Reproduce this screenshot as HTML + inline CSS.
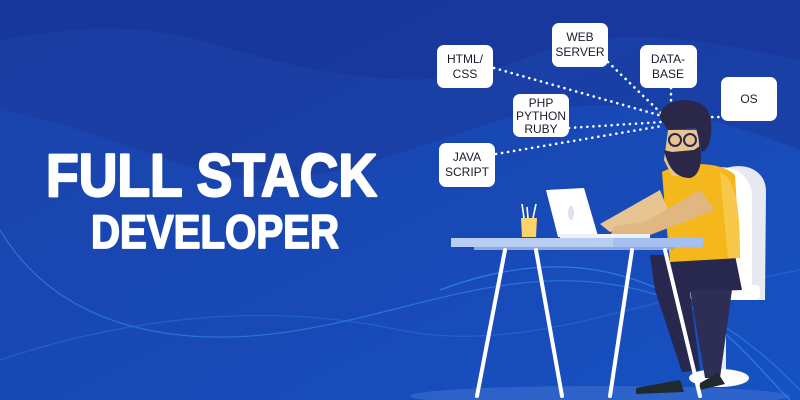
<!DOCTYPE html>
<html><head><meta charset="utf-8"><style>
html,body{margin:0;padding:0;width:800px;height:400px;overflow:hidden;background:#1845b0}
svg{display:block}
</style></head><body>
<svg width="800" height="400" viewBox="0 0 800 400" xmlns="http://www.w3.org/2000/svg">
<defs>
<linearGradient id="bg" x1="0" y1="0" x2="1" y2="1">
<stop offset="0" stop-color="#1c42aa"/><stop offset="0.5" stop-color="#1848b4"/><stop offset="1" stop-color="#1652c2"/>
</linearGradient>
</defs>
<rect width="800" height="400" fill="url(#bg)"/>
<path d="M0 0 H800 V150 C700 110 600 90 500 120 C400 150 300 200 200 170 C120 145 60 120 0 110Z" fill="#1a3a9c" opacity="0.6"/>
<path d="M0 0 H800 V60 C700 40 620 20 520 60 C420 100 300 70 200 40 C120 20 60 30 0 40Z" fill="#17339a" opacity="0.6"/>
<path d="M0 230 C60 330 180 350 300 330 C420 310 520 260 640 290 C720 310 770 360 800 390" stroke="#2d7be0" stroke-width="1.3" fill="none" opacity="0.8"/>
<path d="M0 360 C120 320 260 300 400 330 C520 355 640 300 800 270" stroke="#2a6fd8" stroke-width="1.2" fill="none" opacity="0.6"/>
<path d="M440 290 C520 260 600 255 680 300 C730 330 760 370 790 400" stroke="#2f86ea" stroke-width="1.3" fill="none" opacity="0.8"/>

<text x="46" y="196" font-family="Liberation Sans, sans-serif" font-weight="bold" font-size="60" fill="#fff" stroke="#fff" stroke-width="2.2" stroke-linejoin="round" textLength="331" lengthAdjust="spacingAndGlyphs">FULL STACK</text>
<text x="91" y="248" font-family="Liberation Sans, sans-serif" font-weight="bold" font-size="47" fill="#fff" stroke="#fff" stroke-width="1.8" stroke-linejoin="round" textLength="248" lengthAdjust="spacingAndGlyphs">DEVELOPER</text>

<g stroke="#fff" stroke-width="2.6" stroke-dasharray="0.1 6" stroke-linecap="round" fill="none">
<path d="M494 68 L662 116"/><path d="M608 62 L662 114"/><path d="M671 88 L671 110"/>
<path d="M700 117 L721 117"/><path d="M569 128 L662 122"/><path d="M496 154 L662 126"/>
</g>
<g fill="#fff">
<rect x="437" y="45" width="56" height="43" rx="7"/>
<rect x="552" y="23" width="56" height="44" rx="7"/>
<rect x="640" y="45" width="57" height="43" rx="7"/>
<rect x="721" y="77" width="56" height="44" rx="7"/>
<rect x="513" y="94" width="56" height="43" rx="7"/>
<rect x="439" y="143" width="56" height="44" rx="7"/>
</g>
<g font-family="Liberation Sans, sans-serif" font-size="12" fill="#1b1b2b" text-anchor="middle">
<text x="465" y="63">HTML/</text><text x="465" y="78">CSS</text>
<text x="580" y="41">WEB</text><text x="580" y="56">SERVER</text>
<text x="668" y="63">DATA-</text><text x="668" y="78">BASE</text>
<text x="749" y="103">OS</text>
<text x="541" y="107">PHP</text><text x="541" y="120">PYTHON</text><text x="541" y="133">RUBY</text>
<text x="467" y="161">JAVA</text><text x="467" y="176">SCRIPT</text>
</g>

<ellipse cx="600" cy="396" rx="190" ry="10" fill="#3d6fd0" opacity="0.6"/>
<path d="M720 170 C745 160 765 170 766 190 L765 300 L745 300 L735 175Z" fill="#e6e8f2"/>
<path d="M705 170 C730 162 750 172 752 195 L752 300 L700 300Z" fill="#fff"/>
<rect x="690" y="285" width="70" height="15" rx="4" fill="#fff"/>
<rect x="712" y="300" width="14" height="70" fill="#e8eaf2"/>
<ellipse cx="719" cy="378" rx="30" ry="9" fill="#fff"/>
<path d="M650 255 L735 255 L742 290 L690 292 L700 370 L682 372 L655 290Z" fill="#28274d"/>
<path d="M690 290 L732 290 L720 378 L705 378Z" fill="#2e2d55"/>
<path d="M636 388 L680 380 L684 392 L636 394Z" fill="#1e2a2e"/>
<path d="M700 383 L718 373 L725 384 L700 390Z" fill="#1e2a2e"/>
<path d="M662 172 C680 162 720 160 735 175 L740 258 L670 262 L665 210Z" fill="#f5b81c"/>
<path d="M720 172 C735 180 740 200 740 258 L728 258Z" fill="#f8c84a"/>
<path d="M660 190 L670 215 L610 232 L600 224Z" fill="#e8c493"/>
<path d="M700 190 L715 210 L650 235 L610 236 L615 226 L645 222Z" fill="#e0b681"/>
<path d="M668 130 L698 130 L700 160 L690 176 L672 176 L664 160Z" fill="#e8c493"/>
<path d="M664 150 C668 168 676 178 690 178 C700 176 703 160 700 146 L694 150 L672 152Z" fill="#2a2748"/>
<path d="M660 118 C660 98 692 96 704 106 C716 116 712 150 702 152 L696 128 L668 130Z" fill="#2a2748"/>
<circle cx="675" cy="140" r="6" fill="none" stroke="#2a2748" stroke-width="2"/>
<circle cx="690" cy="140" r="6" fill="none" stroke="#2a2748" stroke-width="2"/>
<path d="M546 190 L584 188 L598 236 L558 237Z" fill="#fff"/>
<ellipse cx="571" cy="213" rx="3" ry="7" fill="#dde2ee"/>
<rect x="560" y="234" width="90" height="4" fill="#eef1f8"/>
<path d="M521 218 L537 218 L536 237 L522 237Z" fill="#fcd56a"/>
<g stroke="#fff" stroke-width="1.6"><line x1="524" y1="218" x2="522" y2="204"/><line x1="528" y1="218" x2="527" y2="207"/><line x1="533" y1="218" x2="536" y2="204"/></g>
<rect x="451" y="238" width="252" height="9" fill="#b9cdf2"/>
<rect x="613" y="238" width="90" height="9" fill="#a5bff0"/>
<rect x="474" y="247" width="200" height="3" fill="#8fa9e0"/>
<g stroke="#fff" stroke-width="4" stroke-linecap="round">
<line x1="505" y1="250" x2="477" y2="396"/><line x1="536" y1="250" x2="562" y2="396"/>
<line x1="632" y1="250" x2="610" y2="396"/><line x1="665" y1="250" x2="700" y2="396"/>
</g>
</svg>
</body></html>
